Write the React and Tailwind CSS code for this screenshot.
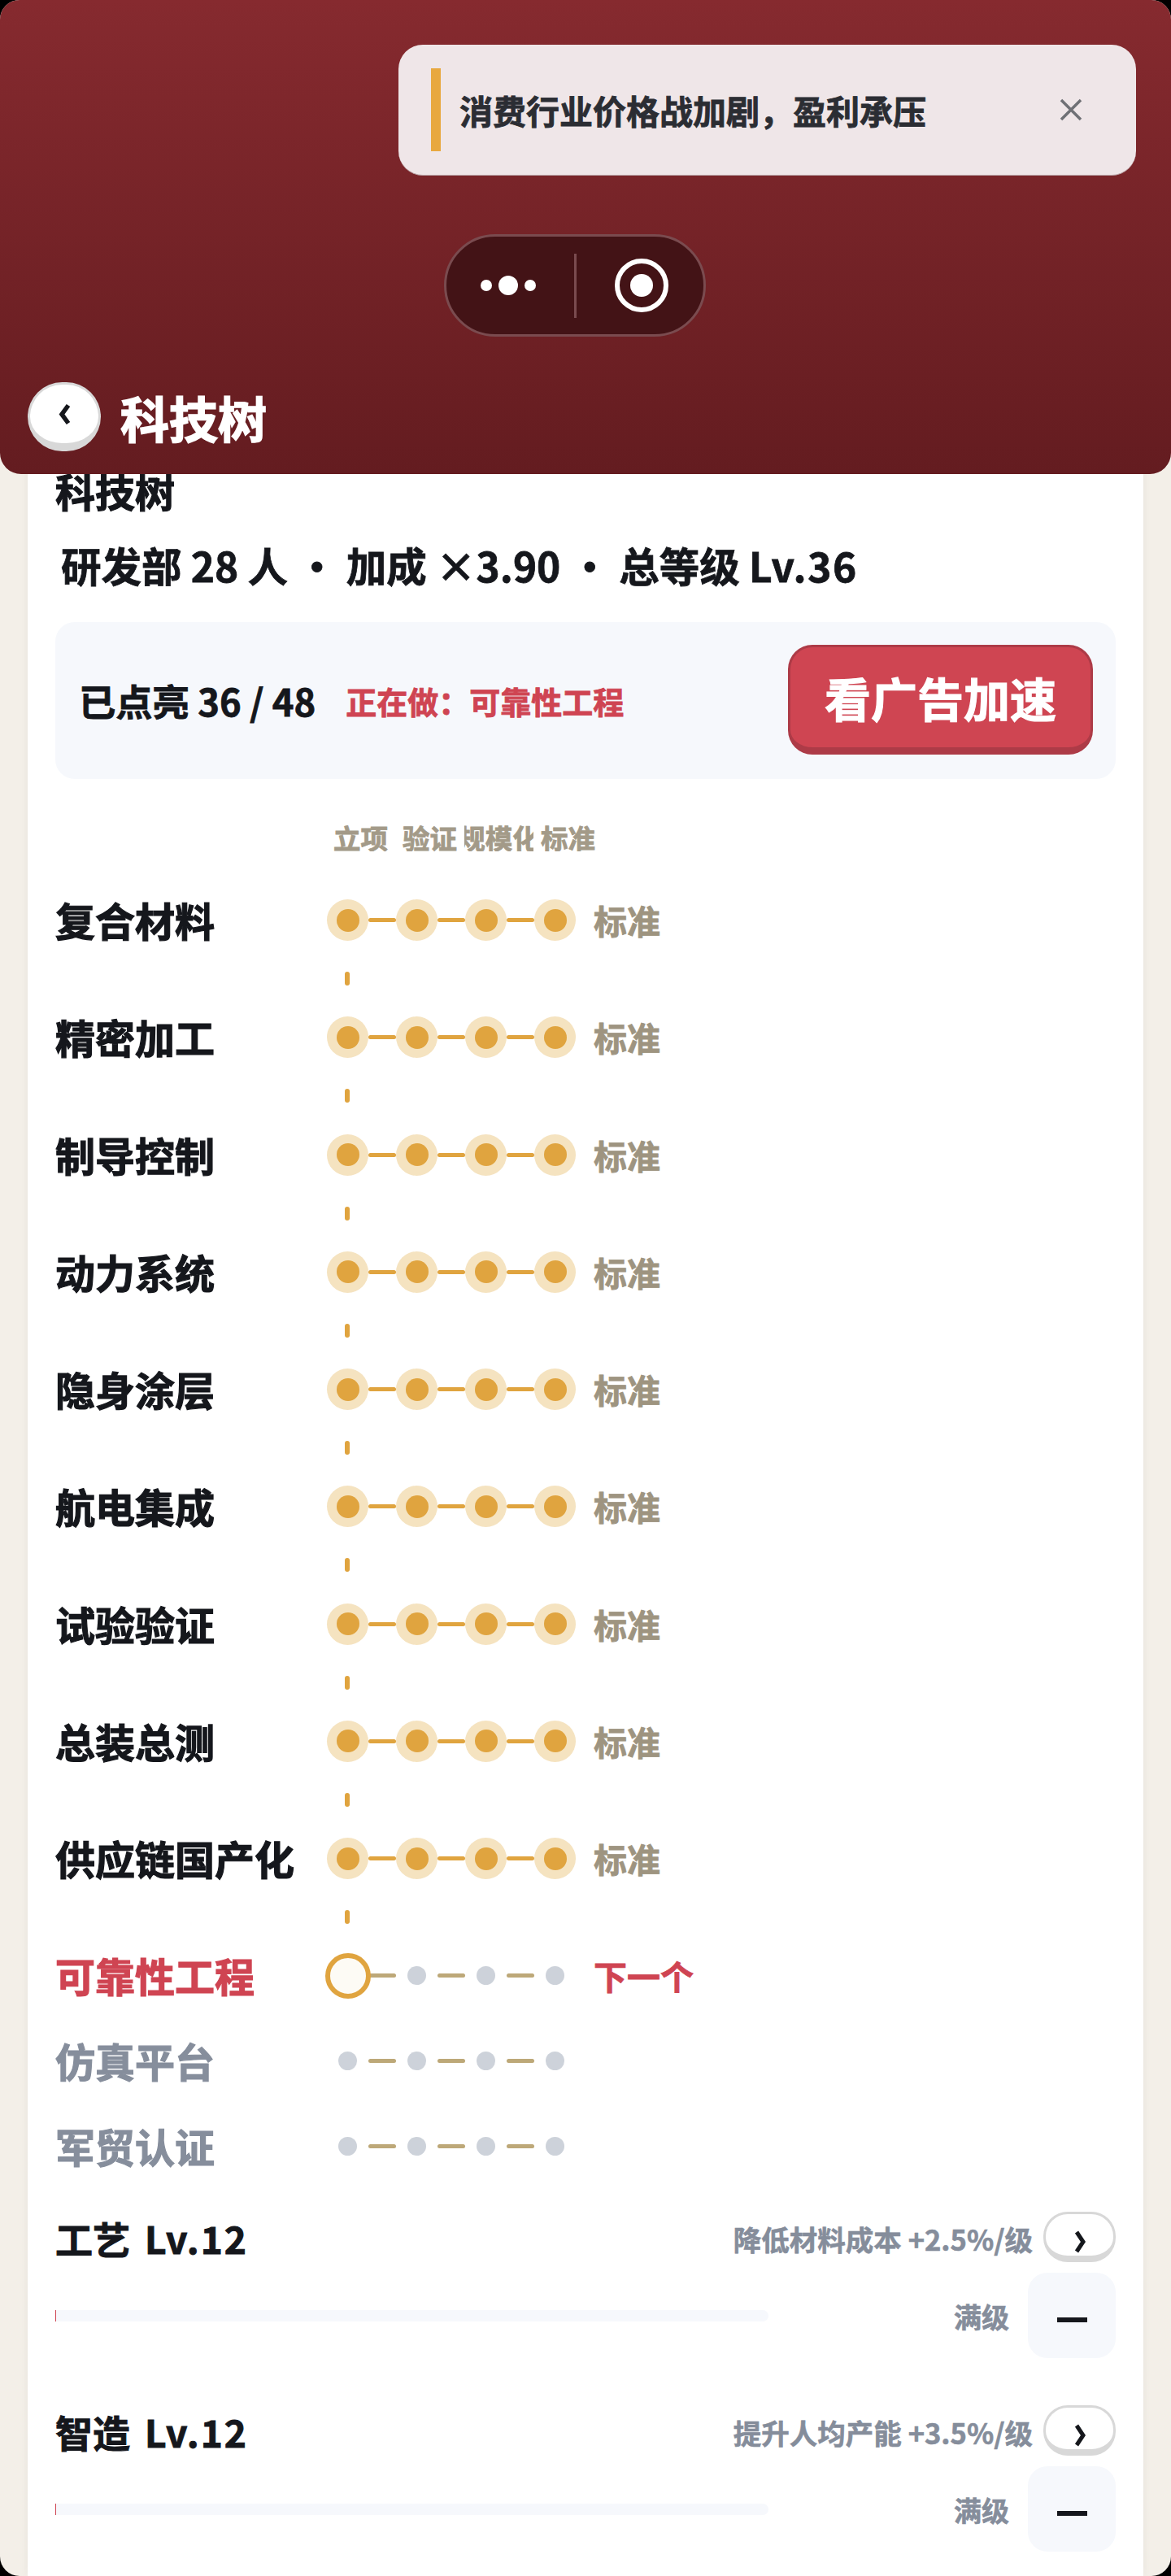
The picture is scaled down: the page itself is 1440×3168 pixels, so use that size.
const FONT = "font-['Noto_Sans_CJK_SC','Noto_Sans',sans-serif]";

const done = ['复合材料', '精密加工', '制导控制', '动力系统', '隐身涂层', '航电集成', '试验验证', '总装总测', '供应链国产化'];

function Link({ className = 'bg-[#e0a43f]' }) {
  return <span className={`w-[34px] h-[5px] rounded-full shrink-0 ${className}`} />;
}

function DoneNode() {
  return (
    <span className="w-[51px] h-[51px] rounded-full bg-[#f5e3c0] flex items-center justify-center shrink-0">
      <span className="w-[28px] h-[28px] rounded-full bg-[#e0a43f]" />
    </span>
  );
}

function GreyNode() {
  return (
    <span className="w-[51px] h-[51px] flex items-center justify-center shrink-0">
      <span className="w-[23px] h-[23px] rounded-full bg-[#cdd2da]" />
    </span>
  );
}

function CurrentNode() {
  return (
    <span className="w-[51px] h-[51px] flex items-center justify-center shrink-0 relative z-10">
      <span className="w-[56px] h-[56px] shrink-0 rounded-full bg-[#fdfbf5] border-[6px] border-[#e0a43f]" />
    </span>
  );
}

function DoneRow({ name }) {
  return (
    <div className="flex items-center h-[51px]">
      <span className="w-[334px] -mt-[2px] text-[49px] leading-none font-bold [-webkit-text-stroke:1.2px_currentColor] text-[#15171c] whitespace-nowrap">{name}</span>
      <div className="flex items-center">
        <DoneNode /><Link /><DoneNode /><Link /><DoneNode /><Link /><DoneNode />
      </div>
      <span className="ml-[22px] text-[41px] leading-none font-bold [-webkit-text-stroke:0.8px_currentColor] text-[#9e9480]">标准</span>
    </div>
  );
}

function LockedRow({ name }) {
  return (
    <div className="flex items-center h-[51px] mt-[54px]">
      <span className="w-[334px] -mt-[2px] text-[49px] leading-none font-bold [-webkit-text-stroke:1.2px_currentColor] text-[#868e9c] whitespace-nowrap">{name}</span>
      <div className="flex items-center">
        <GreyNode /><Link className="bg-[#bda878]" /><GreyNode /><Link className="bg-[#bda878]" /><GreyNode /><Link className="bg-[#bda878]" /><GreyNode />
      </div>
    </div>
  );
}

function VDash() {
  return (
    <div className="h-[93.25px] flex items-center pl-[356px]">
      <span className="w-[6px] h-[17px] rounded-full bg-[#e0a43f]" />
    </div>
  );
}

function Skill({ name, effect, last }) {
  return (
    <div className={`flex flex-col ${last ? 'mt-[58px]' : 'mt-[55px]'}`}>
      <div className="flex items-center justify-between h-[62px]">
        <span className="mt-[2px] text-[46px] leading-none font-bold [-webkit-text-stroke:1px_currentColor] text-[#15171c] whitespace-pre">
          {name}
          <span className="ml-[18px] tracking-[2px]">Lv.12</span>
        </span>
        <div className="flex items-center gap-[13px]">
          <span className="mt-[3px] text-[34.5px] leading-none font-bold [-webkit-text-stroke:0.6px_currentColor] text-[#858d9b] whitespace-nowrap">{effect}</span>
          <span className="w-[89px] h-[62px] rounded-[30px] bg-white border-[3px] border-b-[8px] border-[#d8d8d8] flex items-center justify-center">
            <svg width="15" height="28" viewBox="0 0 15 28" className="mt-[16px] ml-[2px]"><path d="M3 2 L11 14 L3 26" fill="none" stroke="#15171c" strokeWidth="5" /></svg>
          </span>
        </div>
      </div>
      <div className="flex items-center mt-[13px]">
        <div className="w-[877px] h-[14px] rounded-r-full bg-[#f6f8fc]">
          <div className="w-px h-full bg-[#cf4552]" />
        </div>
        <span className="ml-auto mt-[3px] text-[34px] leading-none font-bold [-webkit-text-stroke:0.6px_currentColor] text-[#858d9b]">满级</span>
        <span className="ml-[23px] w-[108px] h-[105px] rounded-[24px] bg-[#f6f8fc] flex items-center justify-center">
          <span className="mt-[11px] w-[37px] h-[6px] bg-[#15171c]" />
        </span>
      </div>
    </div>
  );
}

export default function App() {
  return (
    <div className={`w-[1440px] h-[3168px] bg-black overflow-hidden ${FONT}`}>
      <div className="relative w-full h-full rounded-[24px] overflow-hidden bg-[#f3efe8]">
        {/* top bar lying over the page */}
        <div className="absolute inset-x-0 top-0 h-[583px] rounded-b-[26px] bg-gradient-to-b from-[#862a2f] to-[#641c20] z-20">
          <div className="absolute left-[490px] top-[55px] w-[907px] h-[161px] rounded-[30px] bg-[#efe6e8] border-b border-[#b9a3a6] flex items-center">
            <span className="ml-[40px] w-[12px] h-[102px] bg-[#e8a83f]" />
            <span className="ml-[23px] text-[41px] leading-none font-bold [-webkit-text-stroke:0.8px_currentColor] text-[#2b2d33] whitespace-nowrap">消费行业价格战加剧，盈利承压</span>
            <svg width="30" height="30" viewBox="0 0 30 30" className="absolute left-[812px] top-[65px]">
              <path d="M3 3 L27 27 M27 3 L3 27" stroke="#6f7075" strokeWidth="3.5" fill="none" />
            </svg>
          </div>
          <div className="absolute left-[546px] top-[288px] w-[322px] h-[126px] rounded-full bg-[#431316] border-[3px] border-[#7a4b4f] flex items-center">
            <div className="w-[151px] mr-[6px] flex items-center justify-center gap-[8px]">
              <span className="w-[14px] h-[14px] rounded-full bg-white" />
              <span className="w-[24px] h-[24px] rounded-full bg-white" />
              <span className="w-[14px] h-[14px] rounded-full bg-white" />
            </div>
            <span className="w-[3px] h-[79px] bg-[#7a4b4f]" />
            <div className="flex-1 pl-[4px] flex items-center justify-center">
              <span className="w-[66px] h-[66px] rounded-full border-[6px] border-white flex items-center justify-center">
                <span className="w-[28px] h-[28px] rounded-full bg-white" />
              </span>
            </div>
          </div>
          <div className="absolute left-[34px] top-[470px] flex items-center gap-[25px]">
            <span className="w-[90px] h-[85px] rounded-full bg-white border-[3px] border-b-[10px] border-[#d8d8d8] flex items-center justify-center">
              <svg width="16" height="27" viewBox="0 0 16 27"><path d="M13 2.5 L5 13.5 L13 24.5" fill="none" stroke="#15171c" strokeWidth="5.5" /></svg>
            </span>
            <span className="-ml-[1px] text-[60px] leading-none font-bold [-webkit-text-stroke:1.6px_currentColor] text-white">科技树</span>
          </div>
        </div>

        {/* page card */}
        <div className="mx-[34px] h-full bg-white px-[34px] pt-[575px] shadow-[0_0_10px_rgba(0,0,0,0.05)]">
          <h1 className="text-[49px] leading-[56px] font-bold [-webkit-text-stroke:1.2px_currentColor] text-[#15171c]">科技树</h1>
          <p className="mt-[31px] ml-[7px] text-[49.5px] leading-[66px] font-bold [-webkit-text-stroke:0.8px_currentColor] text-[#15171c] whitespace-pre">
            研发部 28 人 ・ 加成 ×3.90 ・ 总等级 <span className="tracking-[1.6px]">Lv.36</span>
          </p>
          <div className="mt-[37px] h-[193px] rounded-[24px] bg-[#f6f8fc] flex items-center pl-[29px] pr-[28px]">
            <span className="text-[45.3px] leading-none font-bold [-webkit-text-stroke:0.8px_currentColor] text-[#15171c] whitespace-nowrap">已点亮 36 / 48</span>
            <span className="ml-[37px] text-[38px] leading-none font-bold [-webkit-text-stroke:0.8px_currentColor] text-[#cf4452] whitespace-nowrap">正在做：可靠性工程</span>
            <span className="ml-auto w-[375px] h-[135px] -mt-[2px] rounded-[30px] bg-[#cf4552] border-[3px] border-b-[9px] border-[#ad3b47] flex items-center justify-center text-[57px] leading-none font-bold [-webkit-text-stroke:1.2px_currentColor] text-white">看广告加速</span>
          </div>

          <div className="mt-[52px] flex items-center h-[40px] pl-[333px] text-[33.5px] leading-none font-bold [-webkit-text-stroke:0.8px_currentColor] text-[#a39a88]">
            {['立项', '验证', '规模化', '标准'].map((t) => (
              <span key={t} className="w-[85px] shrink-0 flex justify-center overflow-hidden whitespace-nowrap">{t}</span>
            ))}
          </div>

          <div className="mt-[56px]">
            {done.map((n) => (
              <div key={n}>
                <DoneRow name={n} />
                <VDash />
              </div>
            ))}
            <div className="flex items-center h-[51px]">
              <span className="w-[334px] -mt-[2px] text-[49px] leading-none font-bold [-webkit-text-stroke:1.2px_currentColor] text-[#cf4452]">可靠性工程</span>
              <div className="flex items-center">
                <CurrentNode /><Link className="bg-[#bda878]" /><GreyNode /><Link className="bg-[#bda878]" /><GreyNode /><Link className="bg-[#bda878]" /><GreyNode />
              </div>
              <span className="ml-[22px] text-[41px] leading-none font-bold [-webkit-text-stroke:0.8px_currentColor] text-[#cf4452]">下一个</span>
            </div>
            <LockedRow name="仿真平台" />
            <LockedRow name="军贸认证" />
          </div>

          <Skill name="工艺" effect="降低材料成本 +2.5%/级" />
          <Skill name="智造" effect="提升人均产能 +3.5%/级" last />
        </div>
      </div>
    </div>
  );
}
